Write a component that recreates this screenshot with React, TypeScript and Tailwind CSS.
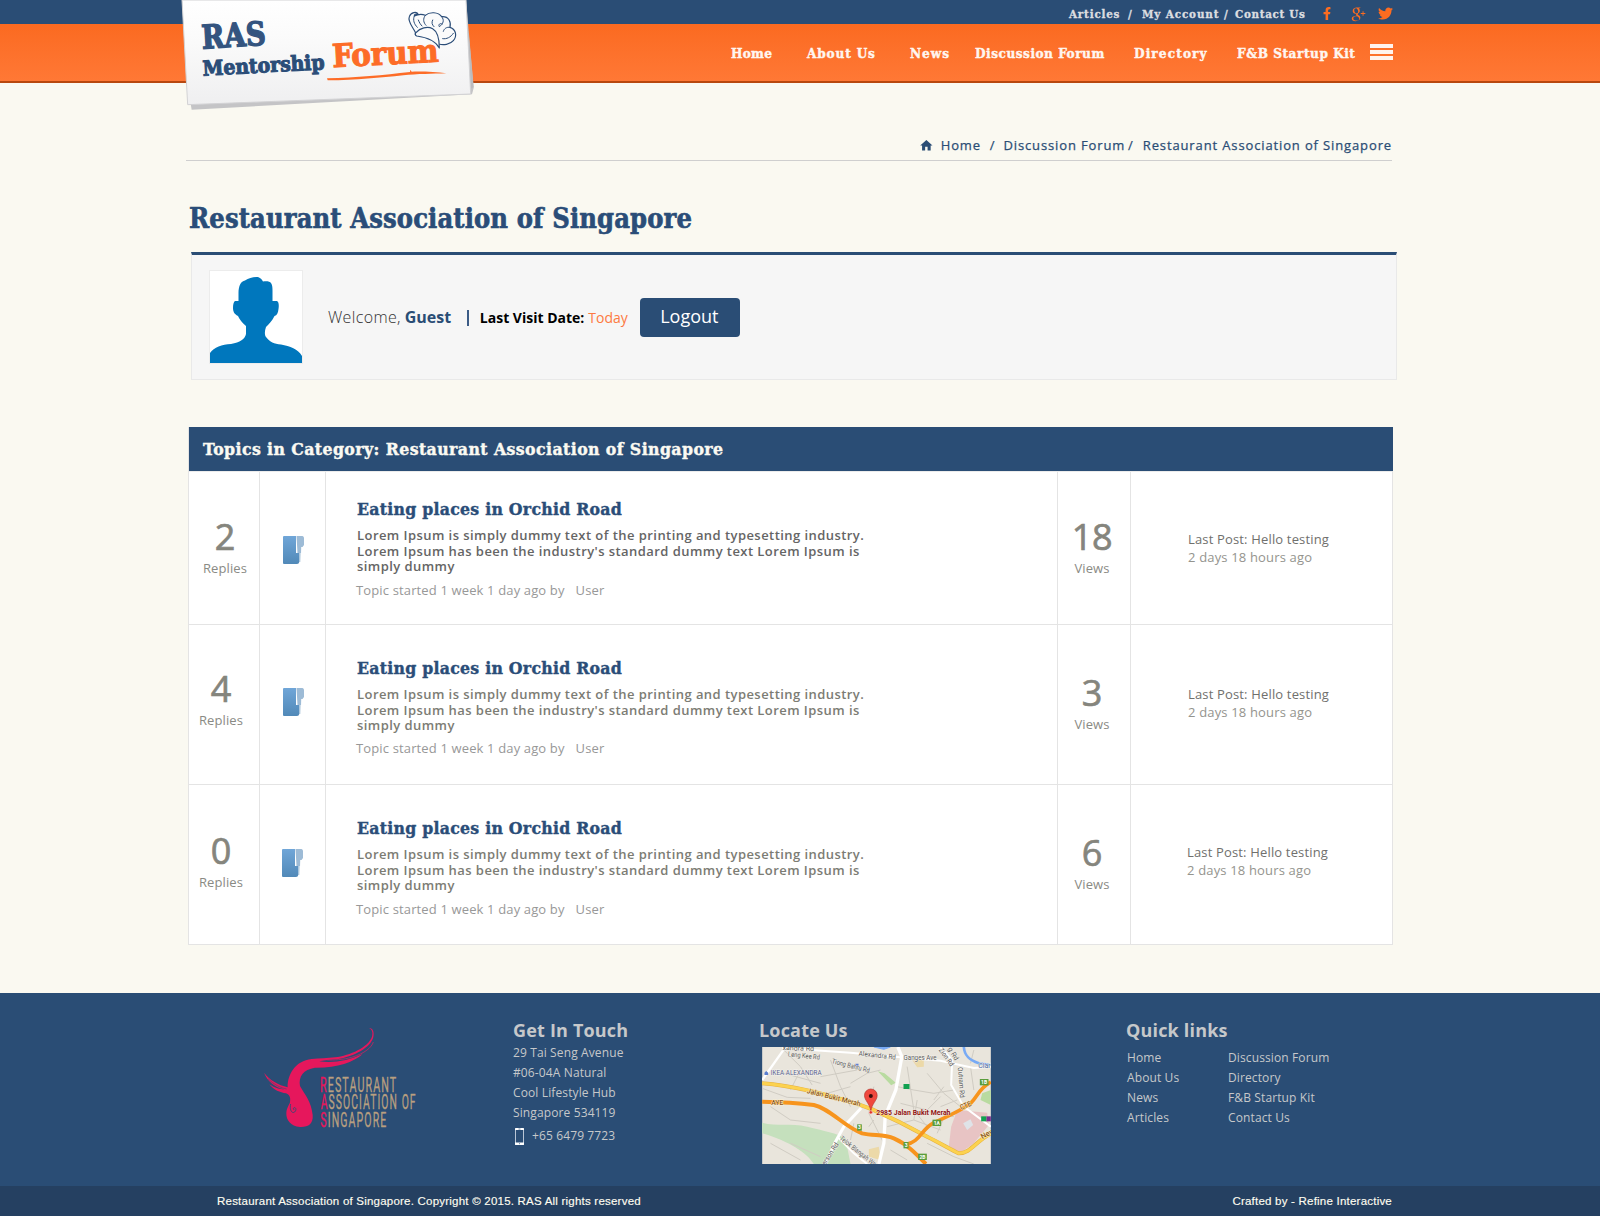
import { FaFacebookF, FaTwitter } from "react-icons/fa";
import { TiSocialGooglePlus } from "react-icons/ti";
import { MdHome } from "react-icons/md";

const SLAB = "DejaVu Serif Condensed, DejaVu Serif, serif";

function HeaderLogo() {
  return (
    <svg className="absolute left-[170px] top-0 z-10 h-[120px] w-[320px]" viewBox="0 0 960 360">
      <defs>
        <linearGradient id="card" x1="0" y1="0" x2="0" y2="1">
          <stop offset="0" stopColor="#ffffff" />
          <stop offset="0.4" stopColor="#fafafa" />
          <stop offset="1" stopColor="#efeff0" />
        </linearGradient>
      </defs>
      <path d="M60 300 L65 329 L906 283 L911 264 L896 100 Z" fill="#c4c4c6" />
      <path d="M888 0 L911 262 L902 266 L880 0 Z" fill="#bcbcbe" />
      <path d="M36 0 L53 314 L902 282 L888 0 Z" fill="url(#card)" stroke="#d2d2d4" strokeWidth="3" />
      <g fontFamily={SLAB} fontWeight="700">
        <text x="97" y="146" fontSize="98" fill="#34547f" stroke="#34547f" strokeWidth="4" textLength="192" lengthAdjust="spacingAndGlyphs" transform="rotate(-3.4 97 146)">RAS</text>
        <text x="99" y="227" fontSize="62" fill="#2b4d78" stroke="#2b4d78" strokeWidth="3" textLength="366" lengthAdjust="spacingAndGlyphs" transform="rotate(-3 99 227)">Mentorship</text>
        <text x="488" y="202" fontSize="96" fill="#fd6c27" stroke="#fd6c27" strokeWidth="3" textLength="320" lengthAdjust="spacingAndGlyphs" transform="rotate(-3 488 202)">Forum</text>
      </g>
      <path d="M471 235 C560 233 640 225 720 216 L721 209 L725 215 C760 214 800 216 829 220 C790 221 740 222 700 226 C630 233 560 241 473 241 Z" fill="#fd6c27" />
      <g fill="none" stroke="#2b4d78" strokeWidth="3.5" strokeLinecap="round" strokeLinejoin="round">
        <path fill="#fbfbfb" d="M736 97 C728 80 712 64 718 50 C723 36 740 34 744 42 C738 40 732 44 733 48 C745 42 755 41 766 46 C778 35 805 35 815 50 C836 48 844 66 840 82 C858 88 862 108 850 122 C840 134 820 136 806 132 C790 110 765 98 736 104 Z" />
        <path fill="#fbfbfb" d="M738 98 C750 84 772 78 788 86 C802 94 808 112 808 144 C796 122 770 112 740 108 C735 105 735 101 738 98 Z" />
        <path d="M733 48 C728 60 732 72 742 82 M766 46 C758 56 760 68 768 76 M815 50 C824 60 820 72 808 80 C804 74 810 68 816 72 M840 82 C830 80 822 86 820 94 M788 60 C784 68 786 74 792 80 M850 100 C842 112 830 118 818 116 M745 60 C748 68 752 74 756 78" strokeWidth="3" />
      </g>
    </svg>
  );
}

function Avatar() {
  return (
    <div className="h-[94px] w-[94px] border border-[#ececec] bg-white">
      <svg viewBox="0 0 92 92" className="h-[92px] w-[92px]">
        <path
          fill="#0077bd"
          d="M0 92 V82 C4 76 12 73.500 21 73 C30 71.500 35 68 36 63 V55 C32 52 29.500 48 28 45 C24 43 23 40 23 37 C23 34 23.500 31 25 30 H28.500 V22 C28.500 15 31 10 35 9.500 C39 7 44 6 48 6 C51 7 52 9 53 10.500 C57 10 60 10.500 61 12 C62.500 14 62.500 17 62.500 20 V30 H67 C69 31 69 35 68.500 38 C68 42 67 44.500 64.500 45 C62 50 59 53 56 56 C54.500 60 54.500 64 56 66 C60 71 64 73 71 73.500 C80 75 88 78 92 85 V92 Z"
        />
      </svg>
    </div>
  );
}

function FolderIcon() {
  return (
    <svg viewBox="0 0 21 28" className="h-[28px] w-[21px]">
      <defs>
        <linearGradient id="folder" x1="0" y1="0" x2="0" y2="1">
          <stop offset="0" stopColor="#70a6d8" />
          <stop offset="1" stopColor="#5189b8" />
        </linearGradient>
      </defs>
      <path d="M15 10 H18.500 L17.500 26 H15.500 Z" fill="#cfdeea" />
      <path d="M13.500 0 H19.500 Q21 0.500 21 2 V9 L19.500 11 H18 V17 H14.500 Z" fill="#9dbbd6" />
      <path d="M1 0 H13 V17 H16.300 V26 Q16 28 14 28 H1 Q0 28 0 27 V1 Q0 0 1 0 Z" fill="url(#folder)" />
    </svg>
  );
}

function RasLogo() {
  return (
    <svg viewBox="72 81 459 306" className="h-[102px] w-[153px]">
      <path
        fill="#e6175c"
        d="M143 262 C142 225 165 182 215 177 C240 175 262 175 285 172 C330 166 385 142 396 110 C400 96 395 88 387 84 C399 84 403 97 400 111 C392 142 345 169 290 178 C265 181 250 181 238 184 C280 190 325 182 368 162 C340 187 290 204 225 203 C190 208 175 230 180 258 C195 285 214 305 218 345 C220 372 205 382 180 381 C152 378 138 360 139 338 C140 322 150 312 150 306 C153 290 146 283 138 280 C120 278 102 270 88 253 C105 265 120 268 133 268 C105 262 82 244 72 218 C90 242 115 254 143 262 Z"
      />
      <path d="M400 126 C395 142 375 160 335 172 C310 179 280 181 262 180" fill="none" stroke="#c02560" strokeWidth="2.500" />
      <path d="M152 312 C148 330 156 342 164 336 C170 330 168 322 163 323 C158 324 160 330 163 329" fill="none" stroke="#2a4d75" strokeWidth="2.500" />
      <path d="M84 236 C102 254 122 264 140 267" fill="none" stroke="#2a4d75" strokeWidth="1.500" />
      <g fontFamily="Roboto, sans-serif" fontSize="58" letterSpacing="6" fill="#b89f80" stroke="#b89f80" strokeWidth="1">
        <g transform="translate(240 275)">
          <text textLength="232" lengthAdjust="spacingAndGlyphs"><tspan fill="#e6175c" stroke="#e6175c">R</tspan>ESTAURANT</text>
        </g>
        <g transform="translate(242 328)">
          <text textLength="288" lengthAdjust="spacingAndGlyphs"><tspan fill="#e6175c" stroke="#e6175c">A</tspan>SSOCIATION OF</text>
        </g>
        <g transform="translate(241 381)">
          <text textLength="201" lengthAdjust="spacingAndGlyphs"><tspan fill="#e6175c" stroke="#e6175c">S</tspan>INGAPORE</text>
        </g>
      </g>
    </svg>
  );
}

function LocationMap() {
  return (
    <svg viewBox="65 111 686 351" className="h-[117px] w-[229px]" fontFamily="Roboto, sans-serif">
      <rect x="65" y="111" width="686" height="351" fill="#e9e5dc" />
      <path d="M65 338 C110 350 150 338 200 350 C250 362 290 370 315 385 L330 462 H220 C200 430 150 395 65 370 Z" fill="#c5e0bd" />
      <path d="M412 184 L432 190 L466 218 L452 226 Z M751 240 L725 250 L720 270 L751 285 Z" fill="#b9dba0" />
      <path d="M515 150 H550 V170 L530 172 Z M385 418 L415 410 L420 450 L385 440 Z" fill="#ecd9a8" />
      <path d="M650 300 L740 308 L745 345 L700 400 L660 428 L625 408 L632 350 Z" fill="#e8c4c4" />
      <path d="M668 340 L690 328 L698 345 L680 360 Z" fill="#dfe3e8" />
      <g fill="none" stroke="#d0ccc3" strokeWidth="3">
        <path d="M65 235 L140 262 L210 265 M130 120 L180 170 L215 225 M90 290 L150 330 L240 340 M270 150 L300 230 L330 290 M330 220 L380 190 L420 180 M400 230 L385 310 L430 400 M240 200 L350 180" />
        <path d="M470 230 L520 240 L580 250 L640 240 M500 170 L520 300 L560 350 M560 190 L610 250 L660 290 M440 350 L520 330 L600 360 M560 400 L640 440 L700 462 M580 270 L610 230 M600 290 L650 270 M690 170 L700 240 M340 340 L330 390 M450 420 L500 450 M150 400 L240 440 M90 400 L180 450 M540 300 L640 320" />
        <path d="M130 190 L240 220 M180 180 L150 240 M260 250 L330 230 M385 350 L400 330 M480 280 L560 300 L600 260 M530 270 L520 330 M590 370 L620 300 M700 120 L690 160" />
      </g>
      <path d="M670 111 C672 140 690 152 715 160 L751 165" fill="none" stroke="#78aaf5" strokeWidth="8" />
      <path d="M400 111 L430 118 L450 111" fill="#78aaf5" stroke="#78aaf5" strokeWidth="3" />
      <g fill="none" stroke="#ffffff">
        <path d="M130 118 L65 210" strokeWidth="7" />
        <path d="M125 114 L330 128 L480 142 L600 152 L700 174 L751 170" strokeWidth="6" />
        <path d="M472 111 L484 140 L466 240 L434 318 L430 400 L415 462" strokeWidth="10" />
        <path d="M362 294 L310 350 L285 395 L255 462" strokeWidth="9" />
        <path d="M290 380 L340 430 L380 462" strokeWidth="6" />
        <path d="M600 111 L635 150 L632 225 L670 290 L751 350" strokeWidth="6" />
      </g>
      <g fill="none" strokeLinejoin="round">
        <path d="M65 220 C120 224 160 232 215 244 C290 262 345 278 395 298 C450 322 510 352 560 380 C600 400 630 418 655 430 C690 430 705 395 751 370" stroke="#e5b040" strokeWidth="12" />
        <path d="M65 220 C120 224 160 232 215 244 C290 262 345 278 395 298 C450 322 510 352 560 380 C600 400 630 418 655 430 C690 430 705 395 751 370" stroke="#fcd24f" strokeWidth="9" />
        <path d="M65 275 C120 276 180 280 220 285 C270 296 310 350 365 370 C400 378 430 372 460 385 C500 402 530 435 556 462" stroke="#f7941d" strokeWidth="12" />
        <path d="M495 404 C540 395 540 360 580 338 C630 315 665 300 690 280 C715 255 715 235 751 216" stroke="#f7941d" strokeWidth="11" />
      </g>
      <g fill="#5a9d3c">
        <rect x="350" y="343" width="14" height="19" />
        <rect x="489" y="396" width="15" height="19" />
        <rect x="576" y="329" width="26" height="19" />
        <rect x="533" y="431" width="26" height="19" />
        <rect x="718" y="207" width="26" height="19" />
      </g>
      <g fill="#ffffff" fontSize="15" fontWeight="700" textAnchor="middle">
        <text x="357" y="358">3</text>
        <text x="497" y="411">3</text>
        <text x="589" y="344">1A</text>
        <text x="546" y="446">2B</text>
        <text x="731" y="222">1B</text>
      </g>
      <rect x="489" y="222" width="18" height="15" fill="#12a150" />
      <rect x="722" y="319" width="16" height="15" fill="#12a150" />
      <rect x="738" y="319" width="13" height="15" fill="#7b2d8e" />
      <path d="M72 195 L72 188 L77 183 L83 188 V195 Z M344 161 h10 v8 h-10 Z" fill="#5b7fd0" />
      <g fontSize="21" fill="#5a5a5a" stroke="#f4f2ed" strokeWidth="2.500" paintOrder="stroke">
        <text x="126" y="120" transform="rotate(2 126 120)">xandra Rd</text>
        <text x="142" y="139" transform="rotate(6 142 139)" textLength="96" lengthAdjust="spacingAndGlyphs">Leng Kee Rd</text>
        <text x="354" y="137" transform="rotate(6 354 137)" textLength="112" lengthAdjust="spacingAndGlyphs">Alexandra Rd</text>
        <text x="489" y="150" textLength="99" lengthAdjust="spacingAndGlyphs">Ganges Ave</text>
        <text x="273" y="160" transform="rotate(14 273 160)" textLength="116" lengthAdjust="spacingAndGlyphs">Tiong Bahru Rd</text>
        <text x="594" y="120" transform="rotate(55 594 120)" textLength="62" lengthAdjust="spacingAndGlyphs">Zion Rd</text>
        <text x="622" y="116" transform="rotate(60 622 116)">g Rd</text>
        <text x="652" y="172" transform="rotate(86 652 172)" textLength="92" lengthAdjust="spacingAndGlyphs">Outram Rd</text>
        <text x="254" y="467" transform="rotate(-57 254 467)" textLength="76" lengthAdjust="spacingAndGlyphs">erson Rd</text>
        <text x="296" y="388" transform="rotate(38 296 388)" textLength="140" lengthAdjust="spacingAndGlyphs">Telok Blangah Way</text>
        <text x="91" y="196" fill="#55608c" textLength="152" lengthAdjust="spacingAndGlyphs">IKEA ALEXANDRA</text>
        <text x="713" y="175" fill="#4c6ba8">Clarke</text>
      </g>
      <g fontSize="22" fontWeight="500" fill="#8a5414" stroke="#fdf0cf" strokeWidth="2.500" paintOrder="stroke">
        <text x="198" y="249" transform="rotate(14 198 249)" textLength="165" lengthAdjust="spacingAndGlyphs">Jalan Bukit Merah</text>
        <text x="92" y="286" textLength="37" lengthAdjust="spacingAndGlyphs">AYE</text>
        <text x="662" y="300" transform="rotate(-22 662 300)" textLength="34" lengthAdjust="spacingAndGlyphs">CTE</text>
        <text x="726" y="388" transform="rotate(-30 726 388)">New</text>
      </g>
      <path d="M391 304 C388 280 372 272 372 256 A19 19 0 0 1 410 256 C410 272 394 280 391 304 Z" fill="#f0483e" stroke="#b3302a" strokeWidth="2" />
      <circle cx="391" cy="258" r="6" fill="#3b0d0b" />
      <circle cx="391" cy="307" r="5" fill="#e0342c" stroke="#f8c8c4" strokeWidth="2" />
      <text x="407" y="314" fontSize="22" fontWeight="700" fill="#8f1414" textLength="223" lengthAdjust="spacingAndGlyphs" stroke="#f6ece4" strokeWidth="2" paintOrder="stroke">2985 Jalan Bukit Merah</text>
    </svg>
  );
}

type Topic = {
  replies: number;
  views: number;
  row: string;
  repliesPad: string;
  iconPad: string;
  bodyPad: string;
  viewsPad: string;
  lastPad: string;
  textColor: string;
  metaGap: string;
};

const topics: Topic[] = [
  { replies: 2, views: 18, row: "h-[153px]", repliesPad: "pt-[45px] pl-[2px]", iconPad: "pt-[64px] pl-[23px]", bodyPad: "pt-[25px]", viewsPad: "pt-[45px]", lastPad: "pt-[58px] pl-[57px]", textColor: "text-[#656565]", metaGap: "mt-[5px]" },
  { replies: 4, views: 3, row: "h-[160px]", repliesPad: "pt-[44px] pr-[6px]", iconPad: "pt-[63px] pl-[23px]", bodyPad: "pt-[31px]", viewsPad: "pt-[48px]", lastPad: "pt-[60px] pl-[57px]", textColor: "text-[#7c7c74]", metaGap: "mt-[4px]" },
  { replies: 0, views: 6, row: "h-[160px]", repliesPad: "pt-[46px] pr-[6px]", iconPad: "pt-[64px] pl-[22px]", bodyPad: "pt-[31px]", viewsPad: "pt-[48px]", lastPad: "pt-[58px] pl-[56px]", textColor: "text-[#7c7c74]", metaGap: "mt-[5px]" },
];

function Count({ value, label, pad, width }: { value: number; label: string; pad: string; width: string }) {
  return (
    <div className={`${width} ${pad} shrink-0 border-r border-[#e4e4e4] text-center`}>
      <div className="h-[40px] text-[36px] leading-[40px] tracking-[-0.3px] text-[#85857d] [-webkit-text-stroke:0.7px_#85857d]">{value}</div>
      <div className="mt-[1px] text-[13px] leading-[20px] tracking-[0.1px] text-[#8a8a84]">{label}</div>
    </div>
  );
}

function TopicRow({ t }: { t: Topic }) {
  return (
    <div className={`flex border-b border-[#e4e4e4] ${t.row}`}>
      <Count value={t.replies} label="Replies" pad={t.repliesPad} width="w-[71px]" />
      <div className={`w-[66px] shrink-0 border-r border-[#e4e4e4] ${t.iconPad}`}>
        <FolderIcon />
      </div>
      <div className={`w-[732px] shrink-0 border-r border-[#e4e4e4] pl-[31px] ${t.bodyPad}`}>
        <h3 className="font-['DejaVu_Serif_Condensed','DejaVu_Serif',serif] text-[17.5px] font-bold leading-[24px] tracking-[0.26px] text-[#2a4d78] [-webkit-text-stroke:0.4px_#2a4d78]">Eating places in Orchid Road</h3>
        <p className={`mt-[7px] w-[520px] text-[13px] font-semibold leading-[15.5px] tracking-[0.44px] ${t.textColor}`}>
          Lorem Ipsum is simply dummy text of the printing and typesetting industry.
          <br />
          Lorem Ipsum has been the industry's standard dummy text Lorem Ipsum is
          <br />
          simply dummy
        </p>
        <div className={`-ml-px flex gap-[11px] text-[13px] leading-[20px] tracking-[0.14px] text-[#989898] ${t.metaGap}`}>
          <span>Topic started 1 week 1 day ago by</span>
          <span>User</span>
        </div>
      </div>
      <Count value={t.views} label="Views" pad={`pr-[4px] ${t.viewsPad}`} width="w-[73px]" />
      <div className={`text-[13px] leading-[18px] tracking-[0.16px] ${t.lastPad}`}>
        <div className="text-[#70706d]">Last Post: Hello testing</div>
        <div className="text-[#94948e]">2 days 18 hours ago</div>
      </div>
    </div>
  );
}

export default function App() {
  return (
    <div className="relative h-[1216px] w-[1600px] overflow-hidden bg-[#faf9f1] font-['Open_Sans',sans-serif]">
      <HeaderLogo />

      <div className="flex h-[24px] items-center whitespace-nowrap bg-[#2a4d75] pl-[1069px] pt-[3px] font-['DejaVu_Serif_Condensed','DejaVu_Serif',serif] text-[11.5px] font-bold leading-[20px] text-[#dcdee0] [-webkit-text-stroke:0.3px_#dcdee0]">
        <span className="w-[59px] tracking-[0.8px]">Articles</span>
        <span className="w-[14px]">/</span>
        <span className="w-[82px] tracking-[0.9px]">My Account</span>
        <span className="w-[11px]">/</span>
        <span className="w-[87px] tracking-[0.68px]">Contact Us</span>
        <FaFacebookF className="mr-[15px] h-[13px] w-[10px] text-[#fd6c20]" />
        <TiSocialGooglePlus className="mr-[9px] h-[22px] w-[22px] text-[#fd6c20]" />
        <FaTwitter className="h-[15px] w-[15px] text-[#fd6c20]" />
      </div>

      <div className="flex h-[59px] items-center whitespace-nowrap border-b-2 border-[#b8480f] bg-gradient-to-b from-[#fb6a20] to-[#ff7835] pl-[731px] font-['DejaVu_Serif_Condensed','DejaVu_Serif',serif] text-[13.5px] font-bold leading-[20px] text-[#fff6f0] [-webkit-text-stroke:0.4px_#fff6f0]">
        <span className="w-[76px] tracking-[0.25px]">Home</span>
        <span className="w-[103px] tracking-[0.83px]">About Us</span>
        <span className="w-[65px] tracking-[1px]">News</span>
        <span className="w-[159px] tracking-[0.5px]">Discussion Forum</span>
        <span className="w-[103px] tracking-[1.1px]">Directory</span>
        <span className="w-[133px] tracking-[0.52px]">F&amp;B Startup Kit</span>
        <div className="flex w-[23px] flex-col gap-[2px] pb-[1px]">
          <div className="h-[4px] bg-[#fff3ee]" />
          <div className="h-[4px] bg-[#fff3ee]" />
          <div className="h-[4px] bg-[#fff3ee]" />
        </div>
      </div>

      <div className="ml-[186px] flex h-[78px] w-[1206px] items-end whitespace-nowrap border-b border-[#cfcfcf] pb-[5px] pl-[733px] text-[13px] font-medium leading-[20px] tracking-[0.87px] text-[#2a4d75] [-webkit-text-stroke:0.25px_#2a4d75]">
        <MdHome className="mb-[2px] mr-[7px] h-[15px] w-[15px]" />
        <span className="w-[50px]">Home</span>
        <span className="w-[14px]">/</span>
        <span className="w-[127px]">Discussion Forum</span>
        <span className="w-[15px]">/</span>
        <span>Restaurant Association of Singapore</span>
      </div>

      <h1 className="ml-[189px] mt-[38px] h-[40px] font-['DejaVu_Serif_Condensed','DejaVu_Serif',serif] text-[27px] font-bold leading-[40px] tracking-[0.13px] text-[#2a4d78] [-webkit-text-stroke:0.6px_#2a4d78]">
        Restaurant Association of Singapore
      </h1>

      <div className="ml-[191px] mt-[13px] flex h-[128px] w-[1206px] items-start whitespace-nowrap border border-t-[3px] border-[#e9e9e9] border-t-[#2a4d75] bg-[#f6f6f6] pl-[17px] pt-[15px]">
        <Avatar />
        <div className="ml-[25px] mt-[28px] flex h-[39px] items-center">
          <span className="pb-[1px] text-[16px] font-light tracking-[0.35px] text-[#333]">Welcome,</span>
          <span className="ml-[4px] w-[62px] pb-[1px] text-[16px] font-bold tracking-[-0.05px] text-[#2a4d75]">Guest</span>
          <span className="h-[16px] w-[2px] bg-[#3c5c86]" />
          <span className="ml-[11px] text-[14px] font-bold text-black">Last Visit Date:</span>
          <span className="ml-[4px] w-[52px] text-[14px] text-[#fd7a42]">Today</span>
          <button className="h-[39px] w-[100px] rounded-[4px] bg-[#2a4d75] pb-[2px] pr-[2px] text-[18px] text-white">Logout</button>
        </div>
      </div>

      <div className="ml-[188px] mt-[47px] w-[1205px] border-l border-r border-[#e4e4e4] bg-white">
        <div className="-mr-px h-[44px] bg-[#2a4d75] pl-[14px] font-['DejaVu_Serif_Condensed','DejaVu_Serif',serif] text-[17.5px] font-bold leading-[44px] tracking-[0.42px] text-[#fbfaf2] [-webkit-text-stroke:0.4px_#fbfaf2]">
          Topics in Category: Restaurant Association of Singapore
        </div>
        <div className="h-px bg-[#ececec]" />
        {topics.map((t) => (
          <TopicRow key={t.replies} t={t} />
        ))}
      </div>

      <footer className="mt-[48px] text-[12px] leading-[20px] tracking-[0.12px] text-[#c6c8ca]">
        <div className="flex h-[193px] bg-[#2a4d75]">
          <div className="w-[513px] shrink-0 pl-[264px] pt-[34px]">
            <RasLogo />
          </div>
          <div className="w-[246px] shrink-0 pt-[25px]">
            <h2 className="mb-[1px] text-[18px] font-bold leading-[24px] tracking-[0.18px]">Get In Touch</h2>
            <p>29 Tai Seng Avenue</p>
            <p>#06-04A Natural</p>
            <p>Cool Lifestyle Hub</p>
            <p>Singapore 534119</p>
            <div className="mt-[3px] flex items-center gap-[8px] pl-[2px]">
              <svg viewBox="0 0 9 17" className="h-[17px] w-[9px]">
                <rect x="0.500" y="0.500" width="8" height="16" rx="0.800" fill="#2a4d75" stroke="#b9c6d6" />
                <path d="M0 0.500 Q0 0 1 0 H8 Q9 0 9 0.500 V2 H0 Z M0 14.500 H9 V16.500 Q9 17 8 17 H1 Q0 17 0 16.500 Z" fill="#fff" />
                <path d="M3.500 1 h2 M4 15.700 h1" stroke="#2a4d75" strokeWidth="0.700" />
              </svg>
              <span>+65 6479 7723</span>
            </div>
          </div>
          <div className="w-[367px] shrink-0 pt-[25px]">
            <h2 className="mb-[5px] text-[18px] font-bold leading-[24px] tracking-[0.18px]">Locate Us</h2>
            <div className="pl-[2.5px]">
              <LocationMap />
            </div>
          </div>
          <div className="pt-[25px]">
            <h2 className="mb-[6px] text-[18px] font-bold leading-[24px] tracking-[0.18px]">Quick links</h2>
            <div className="flex pl-px">
              <ul className="w-[101px]">
                <li>Home</li>
                <li>About Us</li>
                <li>News</li>
                <li>Articles</li>
              </ul>
              <ul>
                <li>Discussion Forum</li>
                <li>Directory</li>
                <li>F&amp;B Startup Kit</li>
                <li>Contact Us</li>
              </ul>
            </div>
          </div>
        </div>
        <div className="flex h-[30px] items-center justify-between bg-[#254061] pl-[217px] pr-[208px] font-['Liberation_Sans',Arial,sans-serif] text-[11.5px] tracking-[0.22px] text-[#fffdf0] [-webkit-text-stroke:0.15px_#fffdf0]">
          <span>Restaurant Association of Singapore. Copyright © 2015. RAS All rights reserved</span>
          <span>Crafted by - Refine Interactive</span>
        </div>
      </footer>
    </div>
  );
}
